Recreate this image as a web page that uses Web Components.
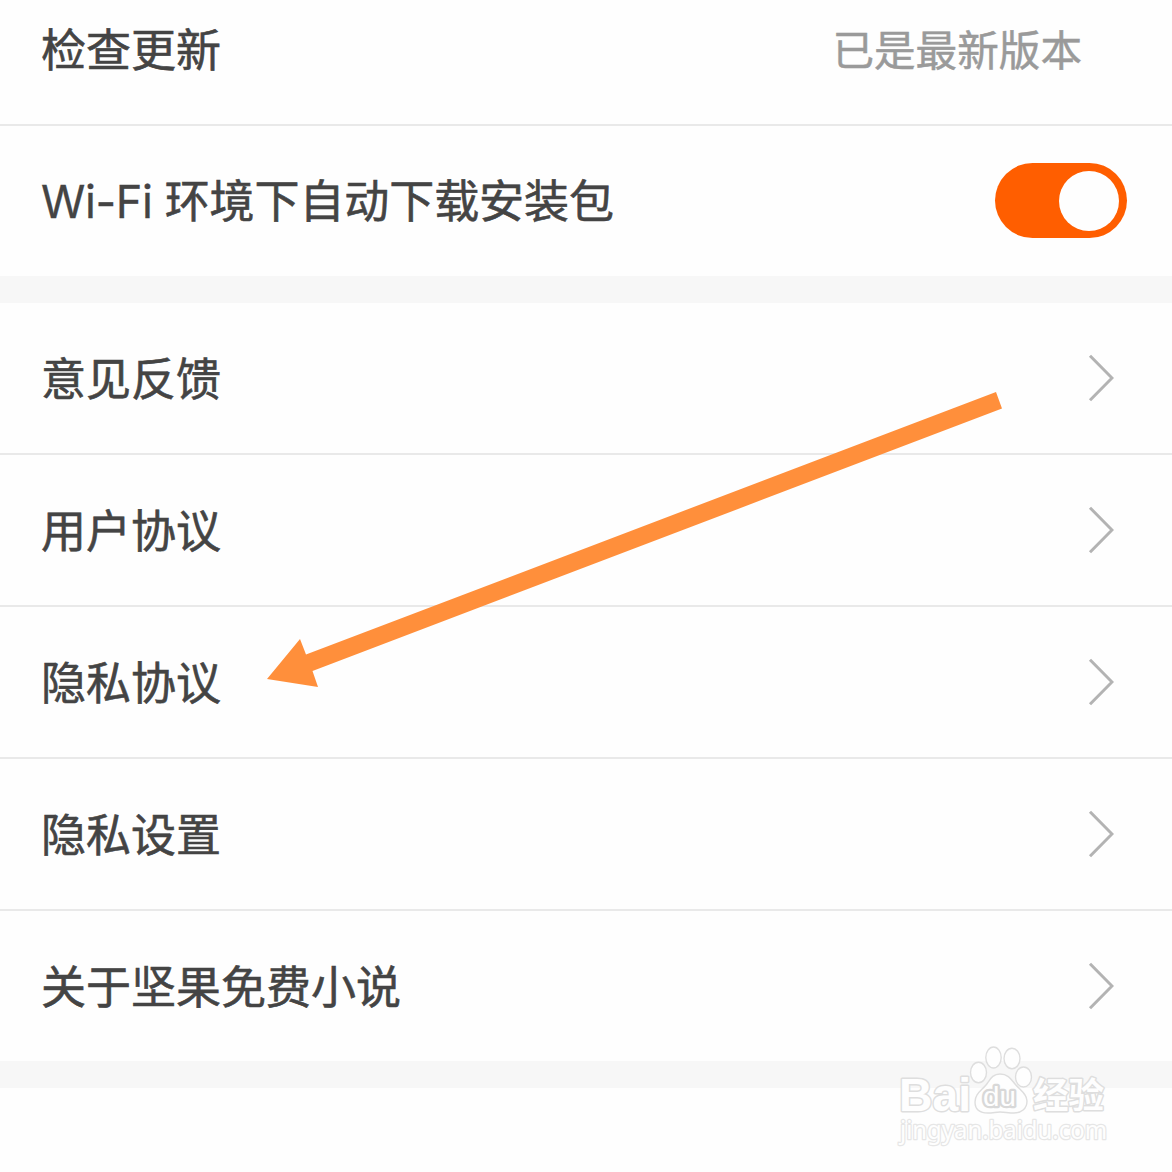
<!DOCTYPE html>
<html lang="zh-CN">
<head>
<meta charset="utf-8">
<title>设置</title>
<style>
html,body{margin:0;padding:0;background:#fefefe}
body{font-family:"Noto Sans CJK SC",sans-serif;overflow:hidden}
</style>
</head>
<body>
<settings-page></settings-page>
<script>
const define=(name,html)=>customElements.define(name,class extends HTMLElement{
  constructor(){super();this.attachShadow({mode:'open'}).innerHTML=html;}
});

define('chevron-icon',`<style>:host{display:block;width:26px;height:48px}svg{display:block}</style>
<svg width="26" height="48" viewBox="0 0 26 48" fill="none" stroke="#b3b3b3" stroke-width="3"><path d="M2 1.800 24 24 2 46.200"/></svg>`);

define('toggle-switch',`<style>
:host{display:flex;box-sizing:border-box;width:132px;height:75px;margin-bottom:1px;padding:0 8px;border-radius:38px;background:#ff5e00;align-items:center;justify-content:flex-end}
i{width:60px;height:60px;border-radius:50%;background:#fefefe}
</style><i></i>`);

define('settings-row',`<style>
:host{display:flex;box-sizing:content-box;height:150px;padding:0 58px 0 41px;align-items:center;justify-content:space-between;color:#444;font-size:45px;line-height:60px}
:host([divided]){border-bottom:2px solid #e9e9e9}
:host([first]){height:98px;padding-bottom:26px;padding-right:90px}
:host([toggle]){padding-right:45px}
.label{-webkit-text-stroke:.6px currentColor;white-space:pre;position:relative;top:-1px}
</style><div class="label"><slot></slot></div><slot name="end"></slot>`);

define('section-gap',`<style>:host{display:block;height:27px;background:#f7f7f7}</style>`);

define('pointer-arrow',`<style>:host{display:block;position:absolute;left:260px;top:385px}svg{display:block}</style>
<svg width="750" height="310" viewBox="260 385 750 310"><path d="M267 679 300 639 306 654.500 996 392 1002 408.500 312.500 671 318 687Z" fill="#ff8f3b"/></svg>`);

define('site-watermark',`<style>
:host{display:block;position:absolute;left:890px;top:1040px}svg{display:block}
text{font-family:"Liberation Sans",sans-serif;paint-order:stroke;stroke-linejoin:round}
</style>
<svg width="230" height="115" viewBox="890 1040 230 115" fill="#fefefe" stroke="#dedede" stroke-width="1.400">
<text x="899" y="1111" font-size="47" font-weight="700" textLength="72" lengthAdjust="spacingAndGlyphs" stroke-width="3">Bai</text>
<ellipse cx="978.500" cy="1072.500" rx="8" ry="10.200"/><ellipse cx="993.500" cy="1057.500" rx="7.700" ry="10.500"/><ellipse cx="1012" cy="1058.500" rx="8" ry="10.200"/><ellipse cx="1023.500" cy="1077" rx="8" ry="10"/>
<path d="M1000 1074c-8 0-10 6-14 11-5 6-11 9-11 17 0 8 6 11 13 11 5 0 8-1 12-1s9 1 14 1c7 0 13-4 13-12 0-7-7-11-12-17-4-5-7-10-15-10Z"/>
<text x="983" y="1105.500" font-size="28" textLength="33" lengthAdjust="spacingAndGlyphs" stroke-width="4.500" stroke="#d8d8d8">du</text>
<text x="1033" y="1108" font-size="35" font-weight="700" textLength="71" lengthAdjust="spacingAndGlyphs" stroke-width="3" style="font-family:'Liberation Sans','Noto Sans CJK SC',sans-serif">经验</text>
<text x="900" y="1139" font-size="24.500" textLength="207" lengthAdjust="spacingAndGlyphs" stroke="#e6e6e6" stroke-width="2.500" style="font-family:'Noto Sans',sans-serif">jingyan.baidu.com</text>
</svg>`);

define('settings-page',`<style>
:host{display:flex;flex-direction:column;width:1172px;height:1172px;background:#fefefe;position:relative;overflow:hidden}
.status{color:#9a9a9a;font-size:41.600px;-webkit-text-stroke:.5px currentColor;position:relative;top:-1px}
.latin{font-family:Inter,sans-serif;letter-spacing:-.4px;-webkit-text-stroke-width:.3px}
.cjk{letter-spacing:-.08px}
</style>
<settings-row first divided>检查更新<span slot="end" class="status">已是最新版本</span></settings-row>
<settings-row toggle><span class="latin">Wi-Fi </span><span class="cjk">环境下自动下载安装包</span><toggle-switch slot="end"></toggle-switch></settings-row>
<section-gap></section-gap>
<settings-row divided>意见反馈<chevron-icon slot="end"></chevron-icon></settings-row>
<settings-row divided>用户协议<chevron-icon slot="end"></chevron-icon></settings-row>
<settings-row divided>隐私协议<chevron-icon slot="end"></chevron-icon></settings-row>
<settings-row divided>隐私设置<chevron-icon slot="end"></chevron-icon></settings-row>
<settings-row>关于坚果免费小说<chevron-icon slot="end"></chevron-icon></settings-row>
<section-gap></section-gap>
<pointer-arrow></pointer-arrow>
<site-watermark></site-watermark>`);
</script>
</body>
</html>
